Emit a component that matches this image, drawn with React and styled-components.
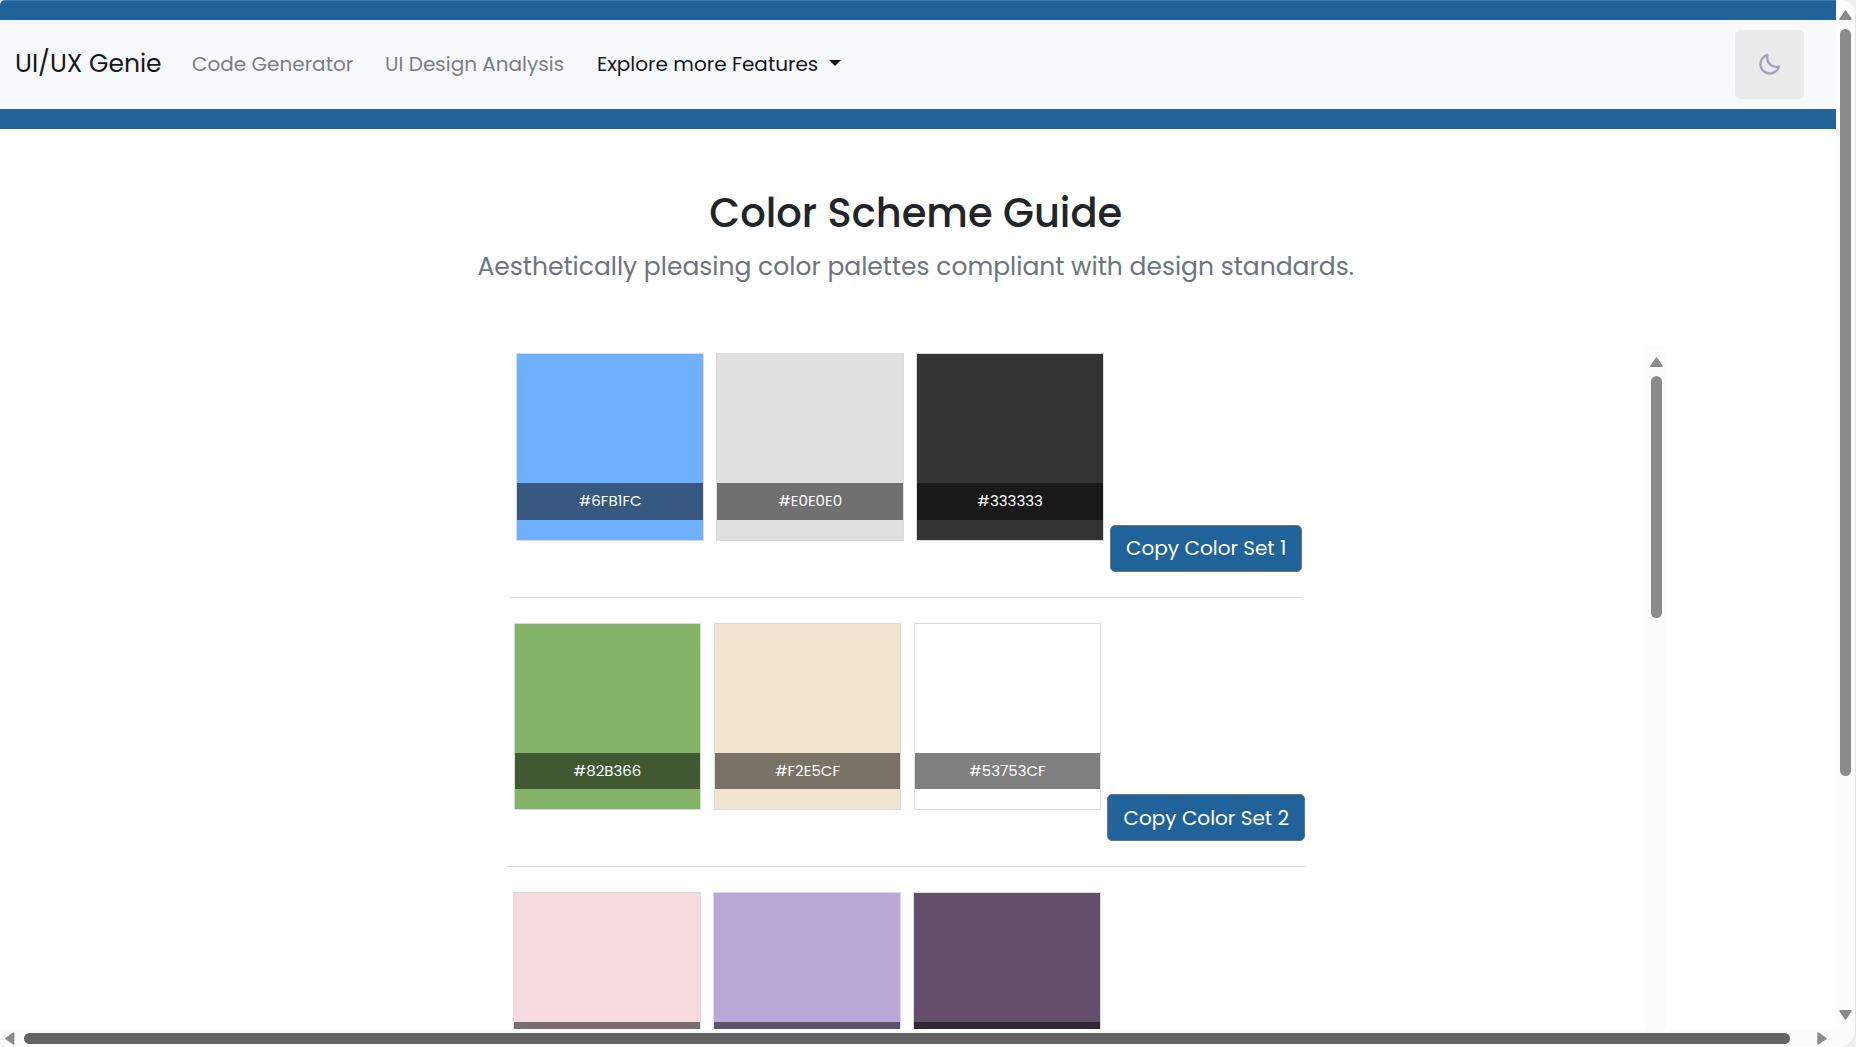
import React from "react";
import styled, { createGlobalStyle } from "styled-components";
import { BiMoon } from "react-icons/bi";

const GlobalStyle = createGlobalStyle`
  *, *::before, *::after { box-sizing: border-box; }
  html, body { margin: 0; height: 100%; overflow: hidden; background: #f0f0f0; }
  body {
    font-family: Poppins, Inter, "Open Sans", sans-serif;
    color: #212529;
  }
`;

const Window = styled.div`
  width: 1856px;
  height: 1047px;
  display: grid;
  grid-template: 1029px 18px / 1836px 20px;
  background: #fcfcfc;
  border-radius: 5px 16px 16px 5px;
  overflow: hidden;
  box-shadow: inset -1px 0 0 #e4e4e4;
`;

const Page = styled.div`
  display: flex;
  flex-direction: column;
  border-top: 1px solid #4079aa;
  background: #fff;
  overflow: hidden;
`;

const Header = styled.header`
  height: 128px;
  flex: none;
  border: solid #20639b;
  border-width: 19px 0 20px;
  background: #f8f9fb;
  display: flex;
  align-items: center;
  padding: 0 32px 0 15px;
`;

const Brand = styled.a`
  width: 177px;
  padding-bottom: 1px;
  font-size: 25px;
  line-height: 38px;
  color: #161718;
  white-space: nowrap;
`;

const NavLink = styled.a`
  display: flex;
  align-items: center;
  width: ${(p) => p.$width}px;
  padding-bottom: 2px;
  font-size: 20px;
  line-height: 30px;
  color: ${(p) => (p.$active ? "#161718" : "#7d7e80")};
  white-space: nowrap;
`;

const Caret = styled.span`
  margin: 0 0 1px 11px;
  border: 6px solid transparent;
  border-top-color: #161718;
  border-bottom: 0;
`;

const ThemeToggle = styled.button`
  width: 69px;
  height: 69px;
  margin-left: auto;
  padding: 0;
  border: 0;
  border-radius: 5px;
  background: #ebebeb;
  color: #a0a3bd;
  display: flex;
  align-items: center;
  justify-content: center;
`;

const Content = styled.main`
  width: 1500.5px;
  margin-left: 165.5px;
  flex: 1;
  min-height: 0;
  display: flex;
  flex-direction: column;
`;

const Title = styled.h1`
  margin: 60px 0 0;
  font-size: 40px;
  font-weight: 500;
  line-height: 48px;
  text-align: center;
`;

const Subtitle = styled.p`
  margin: 10px 0 0;
  height: 100px;
  padding-top: 1px;
  font-size: 25px;
  line-height: 38px;
  text-align: center;
  color: #6c757d;
`;

const Panel = styled.section`
  flex: 1;
  min-height: 0;
  display: flex;
`;

const SetList = styled.div`
  flex: 1;
  padding-top: 6.2px;
  display: flex;
  flex-direction: column;
  align-items: center;
  overflow: hidden;
`;

const ColorSet = styled.div`
  flex: none;
  width: ${(p) => p.$width}px;
  height: 244.4px;
  margin-bottom: 25px;
  border-bottom: 1px solid #ddd;
  display: flex;
  align-items: flex-start;
`;

const Swatch = styled.div`
  flex: none;
  width: 187.5px;
  height: 187.5px;
  margin: 0 6.25px;
  padding-bottom: 20px;
  border: 1px solid #ddd;
  background: ${(p) => p.$color};
  display: flex;
  flex-direction: column;
  justify-content: flex-end;
`;

const HexLabel = styled.div`
  height: 36.4px;
  background: rgba(0, 0, 0, 0.5);
  color: #fff;
  font-size: 15px;
  line-height: 36px;
  text-align: center;
`;

const CopyButton = styled.button`
  flex: 1;
  height: 46.9px;
  margin-top: 171.75px;
  padding: 0;
  border: 1px solid #6c757d;
  border-radius: 5px;
  background: #20639b;
  color: #fff;
  font-family: inherit;
  font-size: 20px;
  line-height: 30px;
  white-space: nowrap;
`;

const VerticalBar = styled.div`
  width: 19px;
  background: #fcfcfc;
  display: flex;
  flex-direction: column;
  align-items: center;
  padding: 10px 0 9px;
`;

const HorizontalBar = styled.div`
  grid-column: 1 / -1;
  display: flex;
  align-items: center;
  padding: 1px 29px 0 5px;
`;

const Thumb = styled.div`
  border-radius: 6px;
  background: ${(p) => (p.$dark ? "#636363" : "#8b8b8b")};
  width: ${(p) => p.$w}px;
  height: ${(p) => p.$h}px;
  margin: ${(p) => p.$margin};
`;

const Arrow = ({ dir }) => {
  const wide = dir === "up" || dir === "down";
  const d = {
    up: "M6.5 1.2 11.8 9H1.2Z",
    down: "M6.5 8.8 11.8 1H1.2Z",
    left: "M1.2 6.5 8.5 1.2V11.8Z",
    right: "M8.8 6.5 1.2 1.2V11.8Z",
  }[dir];
  return (
    <svg width={wide ? 13 : 10} height={wide ? 10 : 13}>
      <path d={d} fill="#8b8b8b" stroke="#8b8b8b" strokeWidth="1.8" strokeLinejoin="round" />
    </svg>
  );
};

const sets = [
  {
    width: 792.2,
    action: "Copy Color Set 1",
    colors: [["#6fb1ff", "#6FB1FC"], ["#e0e0e0", "#E0E0E0"], ["#333333", "#333333"]],
  },
  {
    width: 797.6,
    action: "Copy Color Set 2",
    colors: [["#82b366", "#82B366"], ["#f1e5cf", "#F2E5CF"], ["#ffffff", "#53753CF"]],
  },
  { width: 798.6, colors: [["#f6dade"], ["#b9a8d7"], ["#644e6c"]] },
];

export default function App() {
  return (
    <>
      <GlobalStyle />
      <Window>
        <Page>
          <Header>
            <Brand>UI/UX Genie</Brand>
            <NavLink $width={193}>Code Generator</NavLink>
            <NavLink $width={212}>UI Design Analysis</NavLink>
            <NavLink $active>
              Explore more Features
              <Caret />
            </NavLink>
            <ThemeToggle aria-label="Toggle theme">
              <BiMoon size={25} stroke="currentColor" strokeWidth={0.3} />
            </ThemeToggle>
          </Header>
          <Content>
            <Title>Color Scheme Guide</Title>
            <Subtitle>
              Aesthetically pleasing color palettes compliant with design standards.
            </Subtitle>
            <Panel>
              <SetList>
                {sets.map((set) => (
                  <ColorSet key={set.width} $width={set.width}>
                    {set.colors.map(([color, label]) => (
                      <Swatch key={color} $color={color}>
                        <HexLabel>{label}</HexLabel>
                      </Swatch>
                    ))}
                    {set.action && <CopyButton>{set.action}</CopyButton>}
                  </ColorSet>
                ))}
              </SetList>
              <VerticalBar>
                <Arrow dir="up" />
                <Thumb $w={11} $h={242} $margin="9px 0 0" />
              </VerticalBar>
            </Panel>
          </Content>
        </Page>
        <VerticalBar>
          <Arrow dir="up" />
          <Thumb $w={11} $h={747} $margin="9px 0 auto" />
          <Arrow dir="down" />
        </VerticalBar>
        <HorizontalBar>
          <Arrow dir="left" />
          <Thumb $dark $w={1766} $h={11} $margin="0 auto 0 9px" />
          <Arrow dir="right" />
        </HorizontalBar>
      </Window>
    </>
  );
}
